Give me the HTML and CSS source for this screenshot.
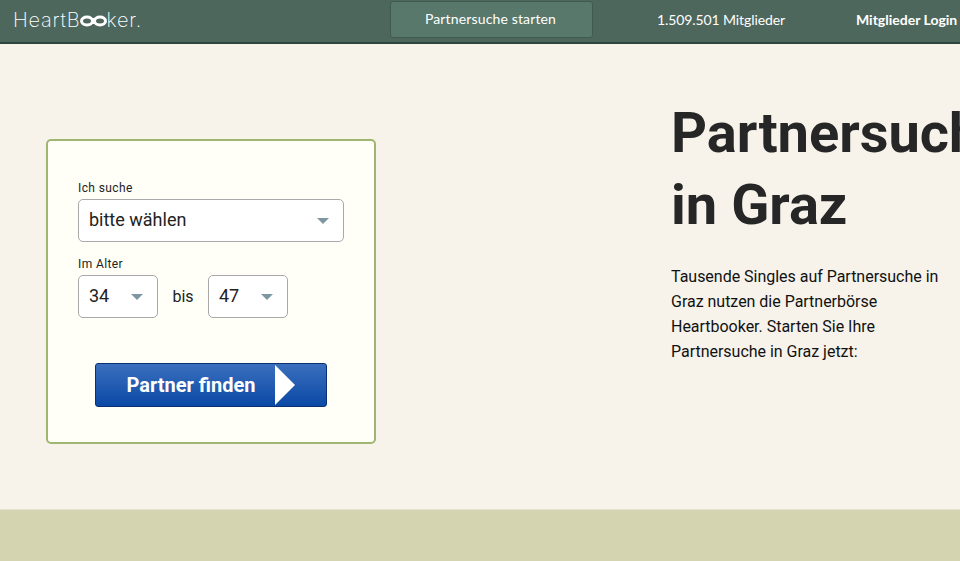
FILE: index.html
```html
<!DOCTYPE html>
<html lang="de">

<head>
    <meta charset="UTF-8" />
    <title>Partnersuche in Graz | Heartbooker</title>
    <link rel="stylesheet" href="styles.css">
</head>

<body>

    <header>
        <a class="logo" href="#">
            <span class="logo-text">HeartB</span>
            <svg class="logo-oo" width="27" height="12" viewBox="0 0 27 12">
                <ellipse cx="7" cy="6" rx="5.5" ry="4" fill="none" stroke="#fff" stroke-width="3" />
                <ellipse cx="20" cy="6" rx="5.5" ry="4" fill="none" stroke="#fff" stroke-width="3" />
                <rect x="11" y="3" width="5" height="6" fill="#fff" />
            </svg>
            <span class="logo-text">ker.</span>
        </a>
        <a class="start-btn" href="#">Partnersuche starten</a>
        <div class="members">1.509.501 Mitglieder</div>
        <a class="login" href="#">Mitglieder Login</a>
    </header>

    <main class="hero">
        <form class="search-card">
            <label class="field-label">Ich suche</label>
            <div class="select select-wide">
                <span>bitte wählen</span>
                <i class="caret"></i>
            </div>
            <label class="field-label">Im Alter</label>
            <div class="age-row">
                <div class="select select-age">
                    <span>34</span>
                    <i class="caret"></i>
                </div>
                <span class="age-sep">bis</span>
                <div class="select select-age">
                    <span>47</span>
                    <i class="caret"></i>
                </div>
            </div>
            <button type="button" class="find-btn">
                <span>Partner finden</span>
                <i class="find-arrow"></i>
            </button>
        </form>

        <div class="intro">
            <h1>Partnersuche<br>in Graz</h1>
            <p>Tausende Singles auf Partnersuche in Graz nutzen die Partnerbörse Heartbooker. Starten Sie Ihre Partnersuche in Graz jetzt:</p>
        </div>
    </main>

    <div class="footer-band"></div>

</body>

</html>
```

FILE: styles.css
```css
* {
    box-sizing: border-box;
}

html,
body {
    height: 100%;
}

body {
    margin: 0;
    display: flex;
    flex-direction: column;
    overflow: hidden;
    font-family: Roboto, sans-serif;
    background-color: #f7f3eb;
    color: #222;
}

a {
    color: #fff;
    text-decoration: none;
}

header {
    flex: none;
    height: 44px;
    display: flex;
    align-items: flex-start;
    background-color: #4e675d;
    border-bottom: 2px solid #2f4640;
    font-family: Lato, sans-serif;
    color: #fff;
}

.logo {
    display: flex;
    align-items: center;
    width: 390px;
    height: 40px;
    padding-left: 13px;
}

.logo-text {
    font-family: Inter, sans-serif;
    font-size: 20px;
    font-weight: 200;
    letter-spacing: 0.8px;
}

.logo-oo {
    margin: 1px -1px 0 0;
}

.start-btn {
    width: 203px;
    height: 37px;
    margin-top: 1px;
    padding-right: 2px;
    text-align: center;
    line-height: 34px;
    font-size: 14px;
    letter-spacing: 0.15px;
    background-color: #58786c;
    border: 1px solid #3f5a50;
    border-radius: 3px;
}

.members {
    margin: 11px 0 0 64px;
    font-size: 14px;
    letter-spacing: -0.1px;
    white-space: nowrap;
}

.login {
    margin: 11px 0 0 71px;
    font-size: 14px;
    font-weight: 700;
    white-space: nowrap;
}

.hero {
    flex: 1;
    display: flex;
    align-items: flex-start;
    padding: 95px 0 0 46px;
}

.search-card {
    flex: none;
    width: 330px;
    height: 305px;
    padding: 39px 30px 0;
    background-color: #fffff8;
    border: 2px solid #9fb672;
    border-radius: 5px;
}

.field-label {
    display: block;
    margin-bottom: 3px;
    font-size: 12px;
    line-height: 16px;
    letter-spacing: 0.4px;
}

.select {
    display: flex;
    align-items: center;
    justify-content: space-between;
    height: 43px;
    padding: 0 14px 2px 10px;
    background-color: #fff;
    border: 1px solid #a9a9a9;
    border-radius: 5px;
    font-size: 18px;
}

.select-wide {
    width: 266px;
    margin-bottom: 14px;
}

.select-age {
    width: 80px;
}

.caret {
    width: 0;
    height: 0;
    margin-top: 2px;
    border-left: 6px solid transparent;
    border-right: 6px solid transparent;
    border-top: 6px solid #7f97a3;
}

.age-row {
    display: flex;
    align-items: center;
}

.age-sep {
    width: 50px;
    text-align: center;
    font-size: 16px;
}

.find-btn {
    position: relative;
    display: block;
    width: 232px;
    height: 44px;
    margin: 45px 0 0 17px;
    padding: 0 40px 0 0;
    background: linear-gradient(#3a6fbd, #0b49a6);
    border: 1px solid #0a2f72;
    border-radius: 3px;
    color: #fff;
    font-family: Roboto, sans-serif;
    font-size: 20px;
    font-weight: 700;
}

.find-arrow {
    position: absolute;
    top: 1px;
    left: 179px;
    width: 0;
    height: 0;
    border-top: 20px solid transparent;
    border-bottom: 20px solid transparent;
    border-left: 20px solid #fff;
}

.intro {
    flex: none;
    width: 270px;
    margin: -42px 0 0 295px;
}

.intro h1 {
    margin: 0 0 23px;
    font-size: 56px;
    line-height: 72px;
    font-weight: 700;
    color: #262626;
    white-space: nowrap;
}

.intro p {
    margin: 0;
    font-size: 16px;
    line-height: 25px;
    letter-spacing: -0.02px;
    color: #111;
}

.footer-band {
    flex: none;
    height: 52px;
    background-color: #d4d4b0;
    border-top: 1px solid #e4e4cc;
}
```
